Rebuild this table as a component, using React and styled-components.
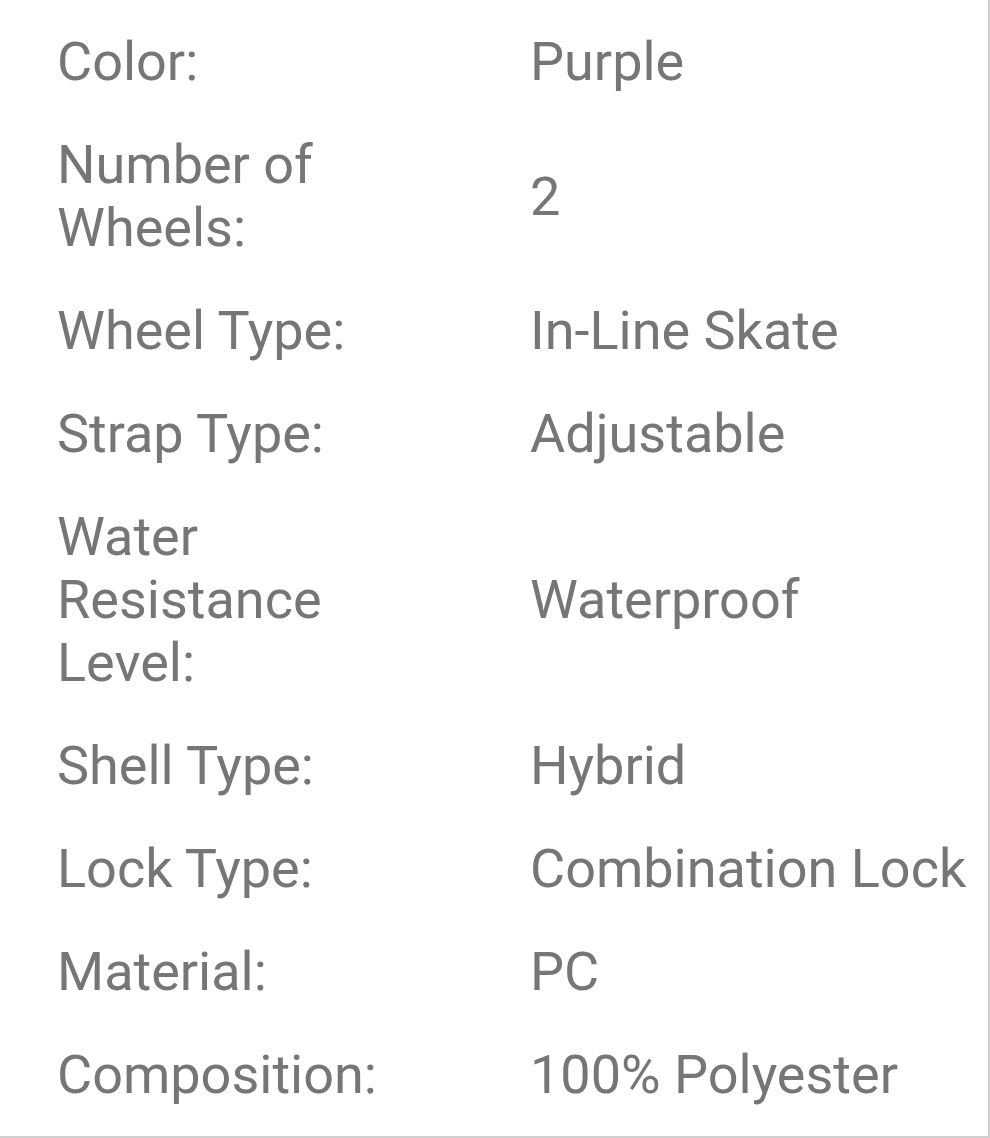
import React from "react";
import styled, { createGlobalStyle } from "styled-components";

const GlobalStyle = createGlobalStyle`
  html, body {
    margin: 0;
    padding: 0;
    background: #ffffff;
  }
  body {
    font-family: Roboto, "Noto Sans", "Liberation Sans", sans-serif;
  }
`;

const Panel = styled.div`
  width: 990px;
  height: 1138px;
  box-sizing: border-box;
  border-right: 2px solid #cfcfcf;
  border-bottom: 2px solid #cfcfcf;
  padding: 10px 0;
  display: flex;
  flex-direction: column;
  background: #fff;
`;

const Row = styled.div`
  display: grid;
  grid-template-columns: 530px 1fr;
  align-items: center;
  padding: 20px 0;
`;

const Label = styled.div`
  padding-left: 57px;
  padding-right: 93px;
  font-size: 54px;
  color: #767676;
`;

const Value = styled.div`
  font-size: 54px;
  color: #767676;
  white-space: nowrap;
`;

const specs = [
  ["Color:", "Purple"],
  ["Number of Wheels:", "2"],
  ["Wheel Type:", "In-Line Skate"],
  ["Strap Type:", "Adjustable"],
  ["Water Resistance Level:", "Waterproof"],
  ["Shell Type:", "Hybrid"],
  ["Lock Type:", "Combination Lock"],
  ["Material:", "PC"],
  ["Composition:", "100% Polyester"],
];

const App = () => {
  return (
    <>
      <GlobalStyle />
      <Panel>
        {specs.map(([label, value]) => (
          <Row key={label}>
            <Label>{label}</Label>
            <Value>{value}</Value>
          </Row>
        ))}
      </Panel>
    </>
  );
};

export default App;
